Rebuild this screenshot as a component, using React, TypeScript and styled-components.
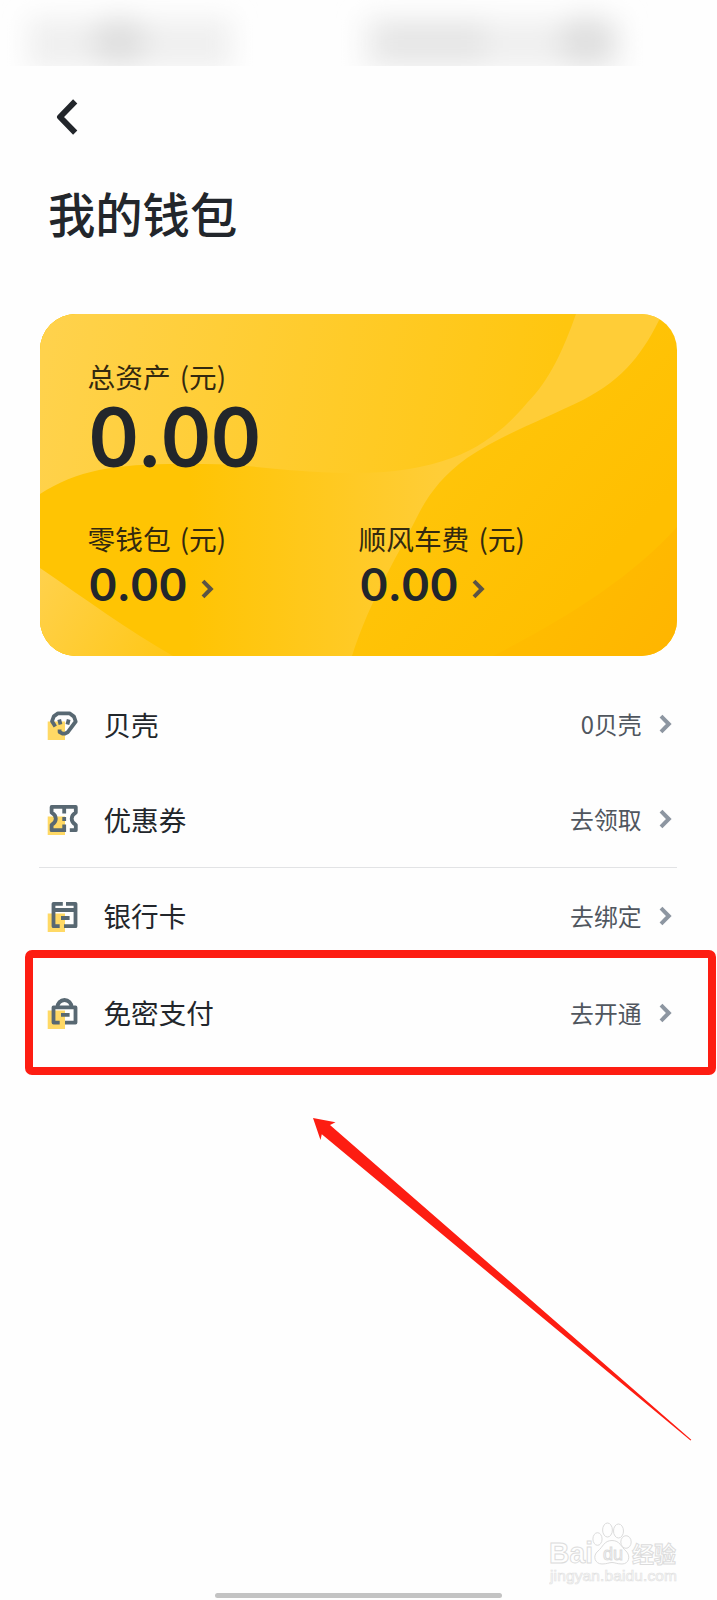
import React from "react";
import styled, { createGlobalStyle } from "styled-components";

const GlobalStyle = createGlobalStyle`
  * { box-sizing: border-box; }
  body { margin: 0; background: #fefefe; }
`;

const Page = styled.main`
  position: relative;
  width: 717px;
  height: 1600px;
  overflow: hidden;
  display: flex;
  flex-direction: column;
  background: #fefefe;
  color: #22262b;
  font-family: "Noto Sans CJK SC", sans-serif;
`;

const StatusBar = styled.div`
  flex: none;
  height: 66px;
  overflow: hidden;
  svg { display: block; }
`;

const NavBar = styled.nav`
  flex: none;
  height: 101px;
  padding: 32px 0 0 55px;
`;

const Title = styled.h1`
  margin: 0;
  flex: none;
  height: 147px;
  padding-left: 48px;
  font-size: 47.3px;
  line-height: 92px;
  font-weight: 500;
`;

const Card = styled.section`
  position: relative;
  flex: none;
  width: 637px;
  height: 342px;
  margin-left: 40px;
  padding: 47px 0 0 48px;
  border-radius: 36px;
  overflow: hidden;
`;

const CardArt = styled.svg`
  position: absolute;
  inset: 0;
`;

const CardBody = styled.div`
  position: relative;
`;

const Label = styled.div`
  height: 30px;
  margin-left: -0.5px;
  font-size: 27.7px;
  line-height: 30px;
  color: #33290f;
  white-space: pre;
  word-spacing: 3px;
`;

const Total = styled.div`
  height: 132px;
  padding-left: 2px;
  font-family: Lato, sans-serif;
  font-size: 81.5px;
  line-height: 90px;
  font-weight: 700;
  letter-spacing: 2.8px;
`;

const Columns = styled.div`
  display: grid;
  grid-template-columns: 271px 1fr;
`;

const Amount = styled.div`
  display: flex;
  align-items: center;
  height: 61px;
  padding-left: 1.5px;
  font-family: Lato, sans-serif;
  font-size: 46.5px;
  line-height: 61px;
  font-weight: 700;
  letter-spacing: 1.7px;
  svg { margin: 10px 0 0 13px; }
`;

const List = styled.section`
  flex: none;
  width: 638px;
  margin: 21px 0 0 39px;
`;

const Row = styled.div<{ $height: number; $divided?: boolean }>`
  display: flex;
  align-items: center;
  height: ${(p) => p.$height}px;
  padding: 0 5px 0 8px;
  border-bottom: ${(p) => (p.$divided ? "1px solid #e2e3e5" : "none")};
`;

const RowName = styled.span`
  flex: 1;
  margin: 0 0 3px 24.5px;
  font-size: 27.6px;
  line-height: 40px;
`;

const RowHint = styled.span`
  margin: 0 17.5px 2px 0;
  font-size: 23.8px;
  line-height: 40px;
  color: #50565e;
`;

const RowChevron = styled.div`
  display: flex;
  padding-bottom: 2px;
`;

const Highlight = styled.div`
  position: absolute;
  left: 25px;
  top: 950px;
  width: 691px;
  height: 125px;
  border: 8px solid #fd1d12;
  border-radius: 7px;
`;

const Arrow = styled.svg`
  position: absolute;
  left: 0;
  top: 1100px;
`;

const Watermark = styled.div`
  position: absolute;
  left: 549px;
  top: 1521px;
  width: 130px;
`;

const WatermarkLogo = styled.svg`
  display: block;
`;

const HomeBar = styled.div`
  position: absolute;
  left: 215px;
  bottom: 2px;
  width: 287px;
  height: 5px;
  border-radius: 3px;
  background: #c3c3c3;
`;

const Chevron = ({ color }: { color: string }) => (
  <svg width="13" height="20" viewBox="0 0 13 20" fill="none">
    <path d="M2 2.2 9.8 10 2 17.8" stroke={color} strokeWidth="4" />
  </svg>
);

const Icon = ({ children }: { children: React.ReactNode }) => (
  <svg width="32" height="32" viewBox="0 0 32 32" fill="none">
    <path d="M.7 12.5H18V31H.7z" fill="#ffd965" />
    <g stroke="#586872" strokeWidth="3.8" strokeLinejoin="round">{children}</g>
  </svg>
);

const ShellIcon = () => (
  <Icon>
    <path d="M8.3 17.6 5 12.3 6.8 7.4 11 4.3H22.5L27 7.6 28.7 12.5 20.6 23.3 18 24.6H15.5L12.6 23V20.6" />
    <path d="M12.2 10.4 13.5 15.4M21.7 10.4 20.4 15.4" />
  </Icon>
);

const CouponIcon = () => (
  <Icon>
    <path d="M16.8 26.2H4.6V20.8C10.2 17.6 10.2 11.6 4.6 8.6V2.9H28.8V8.6C23.3 11.6 23.3 17.6 28.8 20.8V26.2H22.8" />
    <path d="M17.2 3V9.5M17.2 13V17M17.2 20.5V28" />
  </Icon>
);

const CardIcon = () => (
  <Icon>
    <path d="M15.8 2.8H6.5V25.2H12.7M19 2.8H28.5V25.2H17M6.5 9H28.5M14 17H22.6" />
  </Icon>
);

const LockIcon = () => (
  <Icon>
    <path d="M12.7 24.6H6.5V9.4H28.5V24.6H18M14 16.8H22.6M10.4 9.4A7.1 7.4 0 0 1 24.6 9.4" />
  </Icon>
);

const rows = [
  { name: "贝壳", hint: "0贝壳", icon: <ShellIcon />, height: 96 },
  { name: "优惠券", hint: "去领取", icon: <CouponIcon />, height: 95, divided: true },
  { name: "银行卡", hint: "去绑定", icon: <CardIcon />, height: 97 },
  { name: "免密支付", hint: "去开通", icon: <LockIcon />, height: 97 },
];

export default function App() {
  return (
    <Page>
      <GlobalStyle />
      <StatusBar>
        <svg width="717" height="66">
          <defs>
            <filter id="soft" x="-30%" y="-80%" width="160%" height="260%">
              <feGaussianBlur stdDeviation="13" />
            </filter>
          </defs>
          <g filter="url(#soft)">
            <rect x="28" y="18" width="204" height="52" fill="#f0f0f0" />
            <ellipse cx="119" cy="41" rx="28" ry="25" fill="#e0e0e0" />
            <rect x="362" y="18" width="260" height="52" fill="#f0f0f0" />
            <rect x="380" y="20" width="105" height="42" fill="#e6e6e6" />
            <ellipse cx="586" cy="41" rx="28" ry="26" fill="#e0e0e0" />
          </g>
        </svg>
      </StatusBar>

      <NavBar>
        <svg width="26" height="38" viewBox="0 0 26 38" fill="none">
          <path d="M20.2 3.4 5 19 20.2 34.6" stroke="#22262b" strokeWidth="5.9" strokeLinejoin="round" />
        </svg>
      </NavBar>

      <Title>我的钱包</Title>

      <Card>
        <CardArt width="637" height="342" viewBox="0 0 637 342">
          <defs>
            <linearGradient id="base" x1="0" y1="0" x2="1" y2="0.5">
              <stop offset="0" stopColor="#ffc408" />
              <stop offset="0.6" stopColor="#ffc60c" />
              <stop offset="1" stopColor="#ffbf00" />
            </linearGradient>
            <linearGradient id="sky" gradientUnits="userSpaceOnUse" x1="0" y1="60" x2="500" y2="150">
              <stop offset="0" stopColor="#ffd24c" />
              <stop offset="1" stopColor="#ffc60f" />
            </linearGradient>
            <linearGradient id="band" gradientUnits="userSpaceOnUse" x1="150" y1="0" x2="400" y2="0">
              <stop offset="0" stopColor="#ffc403" />
              <stop offset="1" stopColor="#ffcd37" />
            </linearGradient>
            <linearGradient id="corner" gradientUnits="userSpaceOnUse" x1="0" y1="260" x2="130" y2="342">
              <stop offset="0" stopColor="#ffd14b" />
              <stop offset="1" stopColor="#ffc717" />
            </linearGradient>
            <linearGradient id="deep" x1="0" y1="0.5" x2="1" y2="1">
              <stop offset="0" stopColor="#ffbe00" />
              <stop offset="1" stopColor="#ffb500" />
            </linearGradient>
          </defs>
          <path d="M0 0H637V342H0z" fill="url(#base)" />
          <path d="M0 0H622C604 38 585 64 543 86C500 107 463 120 427 144C402 162 388 181 377 203C362 234 330 285 312 342H0z" fill="url(#band)" />
          <path d="M0 0H536C524 34 510 66 487 89C455 127 412 160 310 159C240 158 205 149 157 150C80 149 40 154 0 180z" fill="url(#sky)" />
          <path d="M0 254C45 285 88 316 133 342H0z" fill="url(#corner)" />
          <path d="M637 213C590 265 525 305 453 342H637z" fill="url(#deep)" />
        </CardArt>
        <CardBody>
          <Label>总资产 (元)</Label>
          <Total>0.00</Total>
          <Columns>
            <div>
              <Label>零钱包 (元)</Label>
              <Amount>0.00<Chevron color="#5b5446" /></Amount>
            </div>
            <div>
              <Label>顺风车费 (元)</Label>
              <Amount>0.00<Chevron color="#5b5446" /></Amount>
            </div>
          </Columns>
        </CardBody>
      </Card>

      <List>
        {rows.map((row) => (
          <Row key={row.name} $height={row.height} $divided={row.divided}>
            {row.icon}
            <RowName>{row.name}</RowName>
            <RowHint>{row.hint}</RowHint>
            <RowChevron><Chevron color="#8d96a1" /></RowChevron>
          </Row>
        ))}
      </List>

      <Highlight />
      <Arrow width="717" height="360">
        <path d="M313 18 335.5 22.2 330 25 691.3 339.8 690.5 340.6 321.8 34.3 320.5 40z" fill="#fd1d12" />
      </Arrow>

      <Watermark>
        <WatermarkLogo width="130" height="66" fill="#fefefe" stroke="#dcdcdc" strokeWidth="1">
          <text x="0" y="42" fontFamily="Liberation Sans" fontWeight="700" fontSize="30" textLength="44" lengthAdjust="spacingAndGlyphs">Bai</text>
          <ellipse cx="48.5" cy="18" rx="4.6" ry="6.3" />
          <ellipse cx="58.5" cy="9" rx="4.9" ry="7" />
          <ellipse cx="69.5" cy="10" rx="5" ry="7" />
          <ellipse cx="77" cy="21" rx="5.2" ry="6.3" />
          <path d="M63 19.5C55 19.5 54 26 49 30C43 35 46 43 53 43C58 43 60 41.5 63 41.5S68 43 73 43C80 43 82 35 77 30C72 26 71 19.5 63 19.5z" />
          <text x="54" y="39" fontFamily="Liberation Sans" fontSize="18">du</text>
          <text x="83" y="41" fontFamily="Noto Sans CJK SC" fontWeight="700" fontSize="22">经验</text>
          <text x="1" y="60" fontFamily="Liberation Sans" fontSize="15.5" strokeWidth="0.7" stroke="#e2e2e2" textLength="127">jingyan.baidu.com</text>
        </WatermarkLogo>
      </Watermark>
      <HomeBar />
    </Page>
  );
}
